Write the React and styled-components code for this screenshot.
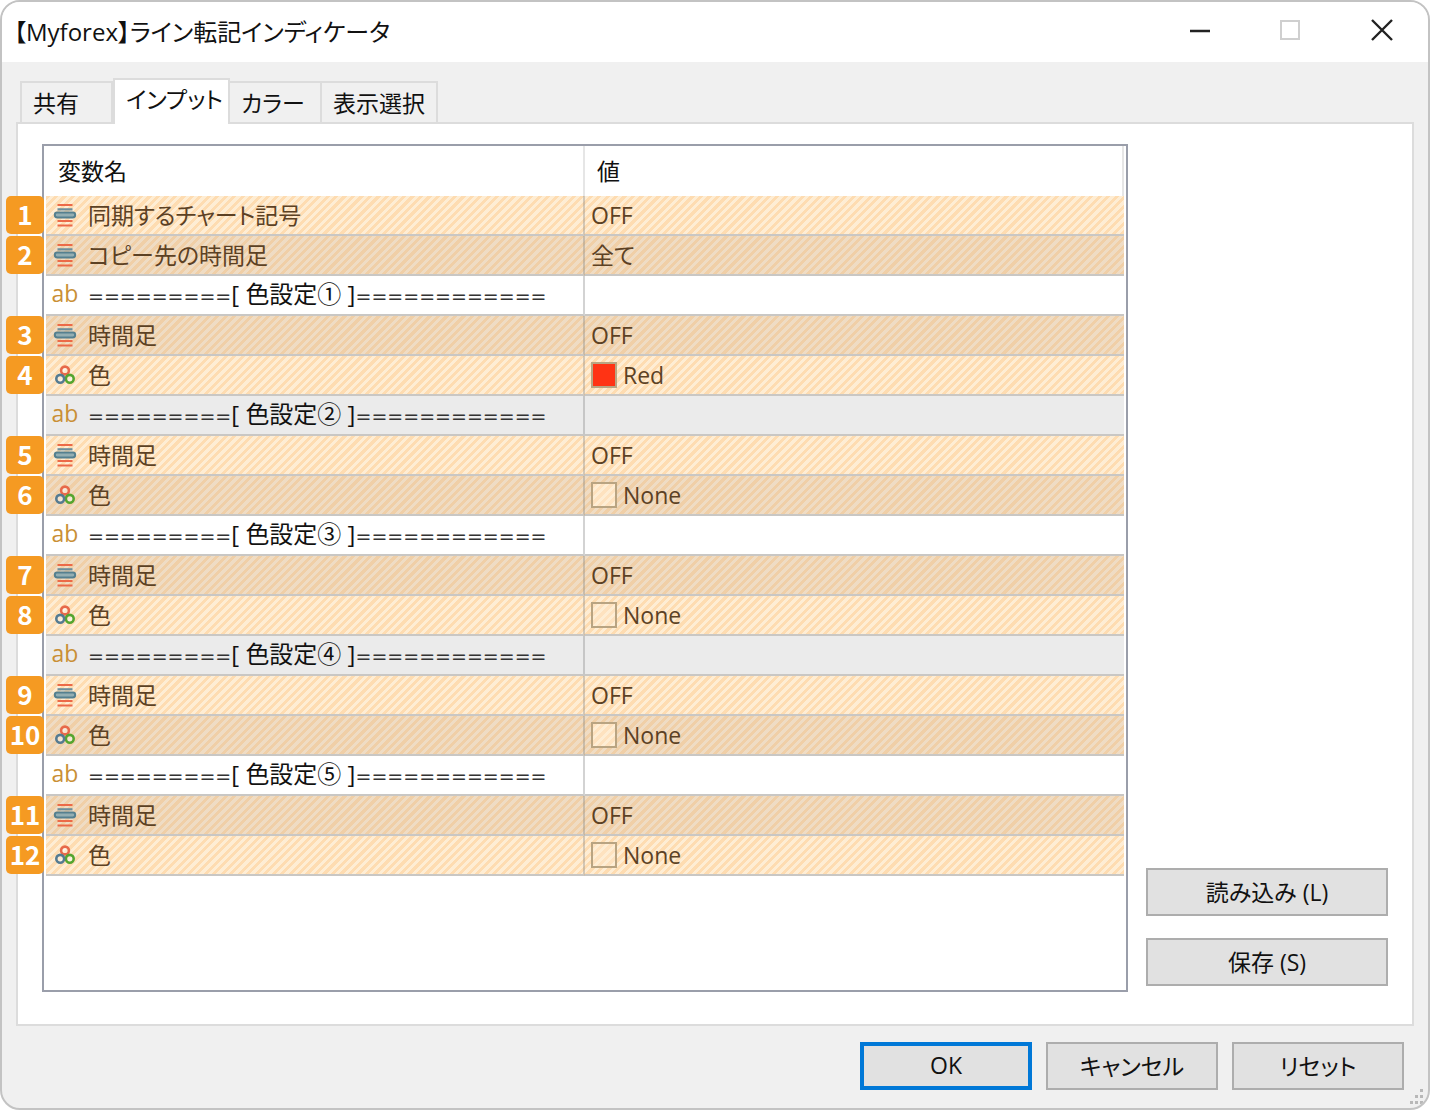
import React, { useState } from 'react'
import styled, { createGlobalStyle } from 'styled-components'

const GlobalStyle = createGlobalStyle`
    * {
        box-sizing: border-box;
    }
    body {
        margin: 0;
        background: #fff;
        font-family: 'Open Sans', 'Noto Sans CJK JP', sans-serif;
        font-size: 23px;
        font-feature-settings: 'palt';
        color: #111;
    }
    button {
        font: inherit;
        font-feature-settings: inherit;
        color: inherit;
        padding: 0;
        cursor: pointer;
    }
`

const Window = styled.div`
    position: relative;
    display: flex;
    flex-direction: column;
    min-height: 100vh;
    background: #f0f0f0;
    border: 2px solid #c3c3c3;
    border-radius: 20px;
    overflow: hidden;
`

const TitleBar = styled.header`
    display: flex;
    align-items: center;
    justify-content: space-between;
    height: 60px;
    padding: 0 24px 4px 12px;
    background: #fff;
`

const Title = styled.h1`
    margin: 0;
    font-size: 24px;
    font-weight: 400;
`

const WindowControls = styled.div`
    display: flex;
    gap: 46px;
`

const ControlButton = styled.button`
    display: flex;
    align-items: center;
    justify-content: center;
    width: 45px;
    height: 44px;
    border: 0;
    background: transparent;
`

const TabList = styled.div`
    position: relative;
    z-index: 1;
    display: flex;
    align-items: flex-end;
    margin-top: 16px;
    padding: 0 18px;
`

const Tab = styled.button`
    width: ${({ $width }) => $width}px;
    height: ${({ $active }) => ($active ? '46px' : '41px')};
    margin-bottom: ${({ $active }) => ($active ? '-2px' : '0')};
    padding: 0 0 ${({ $active }) => ($active ? '6px' : '0')} 11px;
    border: 2px solid #dcdcdc;
    border-bottom: 0;
    border-left-width: ${({ $joined }) => ($joined ? '0' : '2px')};
    background: ${({ $active }) => ($active ? '#fff' : '#f0f0f0')};
    line-height: 36px;
    text-align: left;
    white-space: nowrap;
`

const Panel = styled.main`
    flex: 1;
    display: flex;
    gap: 18px;
    margin: 0 14px;
    padding: 20px 24px 32px;
    border: 2px solid #dcdcdc;
    background: #fff;
`

const ListFrame = styled.div`
    flex: 1;
    padding: 0 2px;
    border: 2px solid #9a9eaa;
`

const Table = styled.table`
    width: 100%;
    border-collapse: separate;
    border-spacing: 0;
    table-layout: fixed;
`

const HeadCell = styled.th`
    height: 50px;
    padding: 0 12px 2px;
    border-right: 2px solid #e6e6e6;
    font-weight: 400;
    text-align: left;
`

const stripes = (a, b) => `repeating-linear-gradient(135deg, ${a} 0 3px, ${b} 3px 6px)`

const rowBackground = ({ $marked, $shaded }) => {
    if ($marked) {
        return $shaded ? stripes('#f0cfa7', '#efdcc4') : stripes('#fedcb1', '#feedd4')
    }
    return $shaded ? '#ebebeb' : '#fff'
}

const Row = styled.tr`
    background: ${rowBackground};
    color: ${({ $marked }) => ($marked ? '#5c4124' : '#111')};
`

const Cell = styled.td`
    position: relative;
    height: 40px;
    padding: 0 6px;
    border-bottom: 2px solid #c9c7c4;
    border-right: ${({ $last }) => ($last ? '0' : '2px solid rgba(130, 130, 130, 0.35)')};
    line-height: 36px;
    white-space: nowrap;
`

const CellContent = styled.div`
    display: flex;
    align-items: center;
    gap: ${({ $gap }) => $gap}px;
    height: 38px;
`

const IconSlot = styled.span`
    display: flex;
    justify-content: center;
    width: 26px;
`

const StringIcon = styled.span`
    height: 38px;
    color: #c98f35;
    line-height: 34px;
`

const GroupName = styled.span`
    font-size: 24px;
`

const Equals = styled.span`
    font-family: 'DejaVu Sans', sans-serif;
    font-size: 19px;
    color: #333;
`

const Badge = styled.span`
    position: absolute;
    left: -40px;
    top: 0;
    width: 38px;
    height: 38px;
    border-radius: 5px;
    background: #f59a22;
    color: #fff;
    font-family: 'Noto Sans CJK JP', sans-serif;
    font-size: 26px;
    font-weight: 700;
    line-height: 36px;
    text-align: center;
`

const Swatch = styled.span`
    width: 26px;
    height: 26px;
    border: 2px solid #b9a482;
    background: ${({ $color }) => $color || stripes('#fee2bf', '#feedd4')};
`

const SideActions = styled.div`
    display: flex;
    flex-direction: column;
    justify-content: flex-end;
    gap: 22px;
    width: 242px;
    padding-bottom: 6px;
`

const PushButton = styled.button`
    height: 48px;
    min-width: 172px;
    padding-bottom: 3px;
    border: ${({ $primary }) => ($primary ? '4px solid #0078d7' : '2px solid #adadad')};
    background: #e1e1e1;
`

const Footer = styled.footer`
    display: flex;
    justify-content: flex-end;
    gap: 14px;
    padding: 16px 24px 18px;
`

const ResizeGrip = styled.svg`
    position: absolute;
    right: 2px;
    bottom: 2px;
`

const EnumIcon = () => (
    <svg width="24" height="24" viewBox="0 0 24 24" aria-hidden="true">
        <path d="M4.5 2h15M4.5 18h15M4.5 22.5h15" stroke="#ec6a48" strokeWidth="2.2" />
        <path d="M4.5 6.3h15" stroke="#6c8e9b" strokeWidth="2.2" />
        <rect x="1.8" y="9.6" width="20.4" height="4.8" rx="2.4" fill="#93aeb2" stroke="#55808f" strokeWidth="2" />
    </svg>
)

const ColorIcon = () => (
    <svg width="24" height="24" viewBox="0 0 24 24" fill="#fff" fillOpacity="0.4" strokeWidth="2.6" aria-hidden="true">
        <circle cx="12" cy="7.5" r="3.9" stroke="#e7694a" />
        <circle cx="16.8" cy="15.8" r="3.9" stroke="#55a52f" />
        <circle cx="7.2" cy="15.8" r="3.9" stroke="#557b91" />
    </svg>
)

const tabs = [
    { label: '共有', width: 93 },
    { label: 'インプット', width: 117 },
    { label: 'カラー', width: 92 },
    { label: '表示選択', width: 116 },
]

const rows = [
    { type: 'enum', name: '同期するチャート記号', value: 'OFF' },
    { type: 'enum', name: 'コピー先の時間足', value: '全て' },
    { type: 'string', name: '色設定①' },
    { type: 'enum', name: '時間足', value: 'OFF' },
    { type: 'color', name: '色', value: 'Red', color: '#ff3314' },
    { type: 'string', name: '色設定②' },
    { type: 'enum', name: '時間足', value: 'OFF' },
    { type: 'color', name: '色', value: 'None' },
    { type: 'string', name: '色設定③' },
    { type: 'enum', name: '時間足', value: 'OFF' },
    { type: 'color', name: '色', value: 'None' },
    { type: 'string', name: '色設定④' },
    { type: 'enum', name: '時間足', value: 'OFF' },
    { type: 'color', name: '色', value: 'None' },
    { type: 'string', name: '色設定⑤' },
    { type: 'enum', name: '時間足', value: 'OFF' },
    { type: 'color', name: '色', value: 'None' },
]

const InputRow = ({ row, index, number }) => {
    const marked = row.type !== 'string'
    return (
        <Row $marked={marked} $shaded={index % 2 === 1}>
            <Cell>
                {marked && <Badge>{number}</Badge>}
                <CellContent $gap={10}>
                    <IconSlot>
                        {row.type === 'enum' && <EnumIcon />}
                        {row.type === 'color' && <ColorIcon />}
                        {row.type === 'string' && <StringIcon>ab</StringIcon>}
                    </IconSlot>
                    {marked ? (
                        <span>{row.name}</span>
                    ) : (
                        <GroupName>
                            <Equals>=========</Equals>[ {row.name} ]<Equals>============</Equals>
                        </GroupName>
                    )}
                </CellContent>
            </Cell>
            <Cell $last>
                <CellContent $gap={6}>
                    {row.type === 'color' && <Swatch $color={row.color} />}
                    {row.value}
                </CellContent>
            </Cell>
        </Row>
    )
}

const App = () => {
    const [active, setActive] = useState(1)
    let number = 0

    return (
        <>
            <GlobalStyle />
            <Window>
                <TitleBar>
                    <Title>【Myforex】ライン転記インディケータ</Title>
                    <WindowControls>
                        <ControlButton aria-label="最小化">
                            <svg width="22" height="22" viewBox="0 0 22 22">
                                <path d="M1 12h20" stroke="#222" strokeWidth="2.6" />
                            </svg>
                        </ControlButton>
                        <ControlButton aria-label="最大化" disabled>
                            <svg width="22" height="22" viewBox="0 0 22 22">
                                <rect x="1" y="2" width="18" height="18" fill="none" stroke="#cfcfcf" strokeWidth="2" />
                            </svg>
                        </ControlButton>
                        <ControlButton aria-label="閉じる">
                            <svg width="22" height="22" viewBox="0 0 22 22">
                                <path d="M1 1l20 20M21 1L1 21" stroke="#222" strokeWidth="2.4" />
                            </svg>
                        </ControlButton>
                    </WindowControls>
                </TitleBar>

                <TabList role="tablist">
                    {tabs.map((tab, index) => (
                        <Tab
                            key={tab.label}
                            role="tab"
                            aria-selected={index === active}
                            $active={index === active}
                            $joined={index > 0 && index !== active}
                            $width={tab.width}
                            onClick={() => setActive(index)}
                        >
                            {tab.label}
                        </Tab>
                    ))}
                </TabList>

                <Panel>
                    <ListFrame>
                        <Table>
                            <thead>
                                <tr>
                                    <HeadCell scope="col">変数名</HeadCell>
                                    <HeadCell scope="col">値</HeadCell>
                                </tr>
                            </thead>
                            <tbody>
                                {rows.map((row, index) => {
                                    if (row.type !== 'string') number += 1
                                    return <InputRow key={index} row={row} index={index} number={number} />
                                })}
                            </tbody>
                        </Table>
                    </ListFrame>
                    <SideActions>
                        <PushButton>読み込み (L)</PushButton>
                        <PushButton>保存 (S)</PushButton>
                    </SideActions>
                </Panel>

                <Footer>
                    <PushButton $primary>OK</PushButton>
                    <PushButton>キャンセル</PushButton>
                    <PushButton>リセット</PushButton>
                </Footer>

                <ResizeGrip width="18" height="18" viewBox="0 0 18 18" fill="#b8b8b8" aria-hidden="true">
                    <path d="M12 1h3v3h-3zM7 7h3v3H7zM12 7h3v3h-3zM2 13h3v3H2zM7 13h3v3H7zM12 13h3v3h-3z" />
                </ResizeGrip>
            </Window>
        </>
    )
}

export default App
